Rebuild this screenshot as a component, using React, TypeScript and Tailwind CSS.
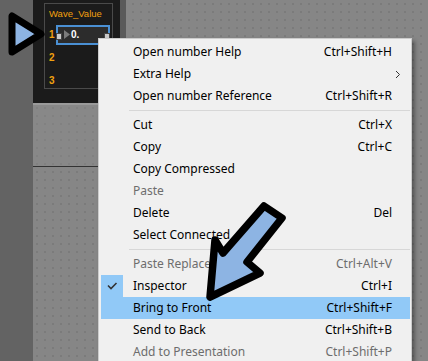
import React from "react";

type Item =
  | { sep: true }
  | {
      sep?: false;
      label: string;
      sc?: string;
      arrow?: boolean;
      disabled?: boolean;
      checked?: boolean;
      active?: boolean;
    };

const items: Item[] = [
  { label: "Open number Help", sc: "Ctrl+Shift+H" },
  { label: "Extra Help", arrow: true },
  { label: "Open number Reference", sc: "Ctrl+Shift+R" },
  { sep: true },
  { label: "Cut", sc: "Ctrl+X" },
  { label: "Copy", sc: "Ctrl+C" },
  { label: "Copy Compressed" },
  { label: "Paste", disabled: true },
  { label: "Delete", sc: "Del" },
  { label: "Select Connected" },
  { sep: true },
  { label: "Paste Replace", sc: "Ctrl+Alt+V", disabled: true },
  { label: "Inspector", sc: "Ctrl+I", checked: true },
  { label: "Bring to Front", sc: "Ctrl+Shift+F", active: true },
  { label: "Send to Back", sc: "Ctrl+Shift+B" },
  { label: "Add to Presentation", sc: "Ctrl+Shift+P", disabled: true },
];

const dots =
  "bg-[radial-gradient(circle,#7b7b7b_0.8px,transparent_1px)] bg-[length:8px_8px]";

function MenuRow({ it }: { it: Exclude<Item, { sep: true }> }) {
  const color = it.disabled ? "text-[#6d6d6d]" : "text-black";
  return (
    <div
      className={`flex h-[22px] items-center ${it.active ? "bg-[#91c9f7]" : ""} ${color}`}
    >
      <div
        className={`flex h-[22px] w-[22px] shrink-0 items-center justify-center ${
          it.checked ? "bg-[#91c9f7]" : ""
        }`}
      >
        {it.checked && (
          <svg width="22" height="22" viewBox="0 0 22 22">
            <polyline
              points="7,10.5 10,13.5 15.5,8"
              fill="none"
              stroke="#333"
              strokeWidth="1.6"
            />
          </svg>
        )}
      </div>
      <span className="ml-[10px] flex-1 whitespace-nowrap">{it.label}</span>
      {it.sc && <span className="mr-[18px] whitespace-nowrap">{it.sc}</span>}
      {it.arrow && (
        <svg width="6" height="9" viewBox="0 0 6 9" className="mr-[9px]">
          <polyline points="1,1 4.5,4.5 1,8" fill="none" stroke="#333" strokeWidth="1" />
        </svg>
      )}
    </div>
  );
}

export default function App() {
  return (
    <div
      className="relative flex h-[361px] w-[428px] overflow-hidden bg-[#868686]"
      style={{ fontFamily: '"Liberation Sans", Arial, sans-serif' }}
    >
      {/* left column */}
      <div className="h-full w-[33px] shrink-0 bg-[#636363]" />

      {/* canvas */}
      <div className={`flex h-full flex-1 flex-col ${dots}`}>
        <div className="flex">
          {/* dark patcher panel */}
          <div className="h-[103px] w-[87px] shrink-0 bg-[#1b1b1b] pl-[11px] pt-[3px]">
            <div className="flex h-[86px] w-[69px] flex-col border border-[#4a4a4a] pl-[4px] pt-[1px]">
              <div className="flex h-[18px] shrink-0 items-center text-[9.5px] leading-none text-[#f2a10f]">
                Wave_Value
              </div>
              <div className="flex h-[23px] shrink-0 items-center">
                <span className="w-[7px] text-[10px] font-bold leading-none text-[#f2a10f]">1</span>
                <div className="relative flex h-[20px] w-[54px] items-center border-2 border-[#4a90d4] bg-[#2c2c2c]">
                  <div className="absolute left-[-2px] top-[6px] h-[7px] w-[6px] border border-[#444] bg-[#c9c9c9]" />
                  <svg width="6" height="9" viewBox="0 0 6 9" className="ml-[6px]">
                    <polygon points="0,0 6,4.5 0,9" fill="#7a7a7a" />
                  </svg>
                  <span className="ml-[1px] text-[10px] font-bold leading-none text-white">0.</span>
                  <div className="absolute right-[-2px] top-[6px] h-[7px] w-[6px] border border-[#444] bg-[#c9c9c9]" />
                </div>
              </div>
              <div className="flex h-[23px] shrink-0 items-center">
                <span className="text-[10px] font-bold leading-none text-[#f2a10f]">2</span>
              </div>
              <div className="flex h-[23px] shrink-0 items-center">
                <span className="text-[10px] font-bold leading-none text-[#f2a10f]">3</span>
              </div>
            </div>
          </div>
          <div className="h-[103px] w-[6px] shrink-0 bg-[#5a5a5a]" />
        </div>
        <div className="h-[64px] w-[93px] border-b border-[#333] border-t-2 border-t-[#9a9a9a] bg-[#8b8b8b]/40" />
      </div>

      {/* context menu */}
      <div
        className="absolute left-[98px] top-[38px] w-[314px] border border-[#cccccc] bg-[#f0f0f0] pb-[2px] pl-[2px] pr-[1px] pt-[2px] text-[12px] shadow-[3px_3px_4px_rgba(0,0,0,0.35)]"
        style={{ fontFamily: '"Noto Sans", "Liberation Sans", sans-serif' }}
      >
        {items.map((it, i) =>
          it.sep ? (
            <div key={i} className="h-[7px] pt-[3px]">
              <div className="ml-[28px] h-px bg-[#d7d7d7]" />
            </div>
          ) : (
            <MenuRow key={i} it={it} />
          )
        )}
      </div>

      {/* annotation arrows */}
      <svg
        className="pointer-events-none absolute left-0 top-0"
        width="428"
        height="361"
        viewBox="0 0 428 361"
      >
        <polygon
          points="12,16 12,52 41,34"
          fill="#8db4e3"
          stroke="#000"
          strokeWidth="7"
          strokeLinejoin="round"
        />
        <polygon
          points="264,206 282,218 247,262 260,273 210,297 215,240 223,253"
          fill="#8db4e3"
          stroke="#000"
          strokeWidth="7.5"
          strokeLinejoin="round"
        />
      </svg>
    </div>
  );
}
